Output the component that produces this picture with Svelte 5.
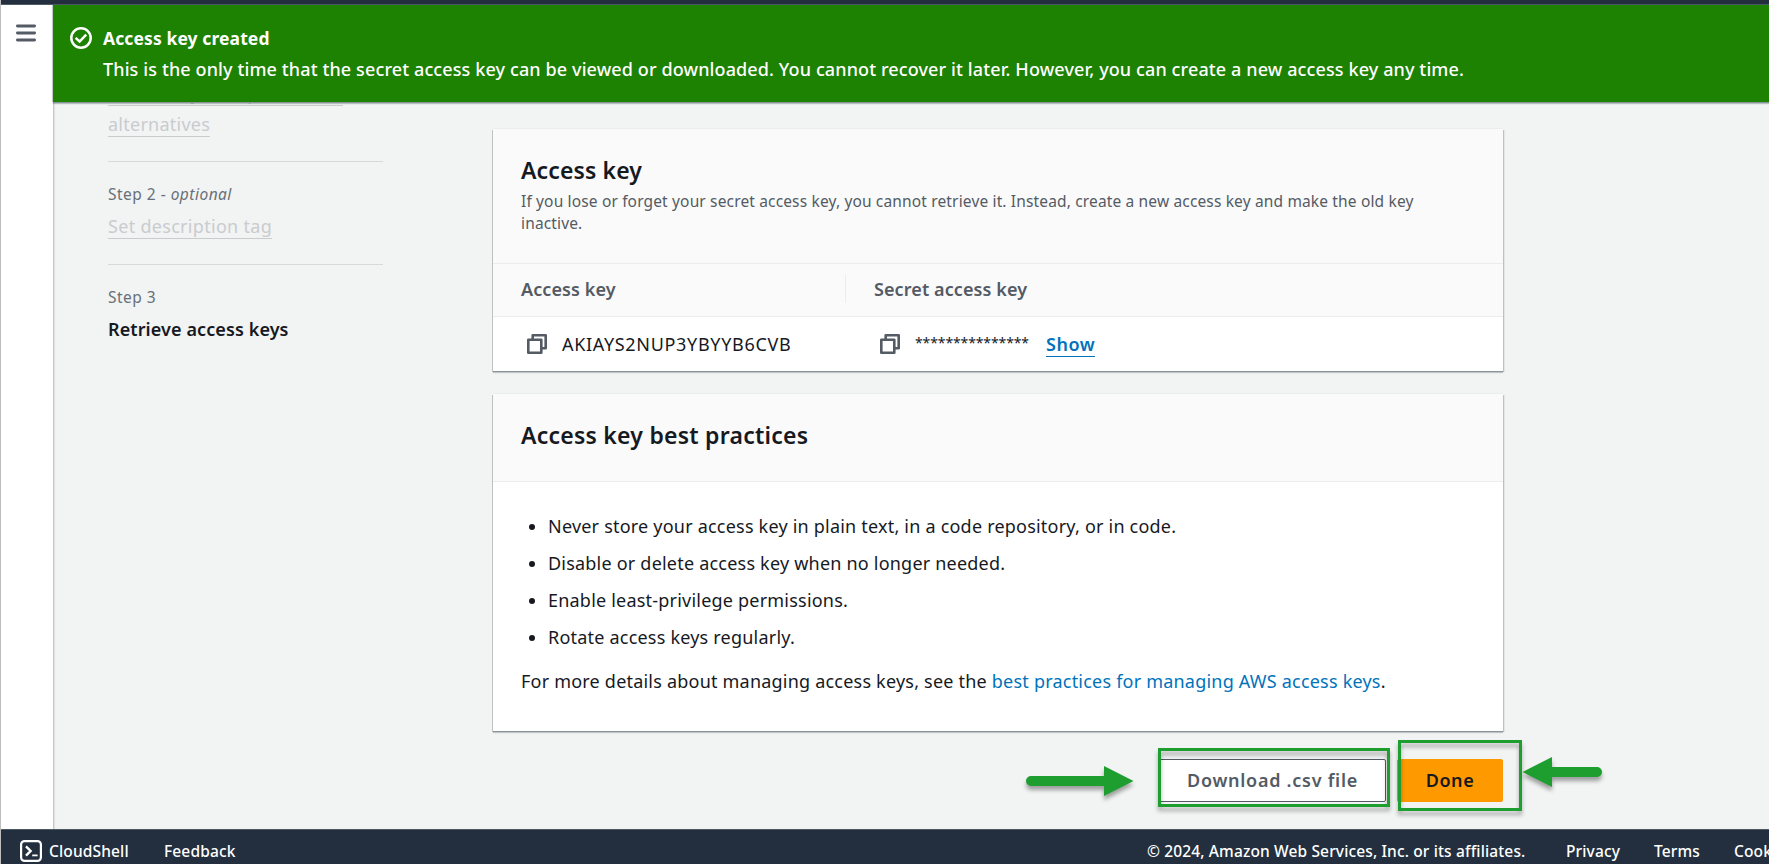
<script>
  const practices = [
    'Never store your access key in plain text, in a code repository, or in code.',
    'Disable or delete access key when no longer needed.',
    'Enable least-privilege permissions.',
    'Rotate access keys regularly.'
  ];
</script>

{#snippet copyIcon()}
  <svg class="copy" width="20" height="20" viewBox="0 0 20 20" fill="none" stroke="#545b64" stroke-width="2.6" stroke-linejoin="round">
    <path d="M1.3 5.7h13v13h-13z" />
    <path d="M5.7 5.2V1.3h13v13h-4" />
  </svg>
{/snippet}

<div class="screen">
  <div class="topbar"></div>
  <div class="body">
    <nav class="rail">
      <svg width="20" height="18" viewBox="0 0 20 18" stroke="#545b64" stroke-width="2.8" stroke-linecap="round">
        <path d="M1.4 2h17.2M1.4 9h17.2M1.4 16h17.2" />
      </svg>
    </nav>
    <main>
      <header class="flash">
        <svg width="22" height="22" viewBox="0 0 22 22" fill="none" stroke="#fff" stroke-width="2.5">
          <circle cx="11" cy="11" r="9.7" />
          <path d="M5.6 10.8l4 3.7 6.6-6.9" />
        </svg>
        <div>
          <div class="flash-title">Access key created</div>
          <div class="flash-text">This is the only time that the secret access key can be viewed or downloaded. You cannot recover it later. However, you can create a new access key any time.</div>
        </div>
      </header>

      <div class="content">
        <ol class="steps">
          <li class="first"><div class="link"><span>Access key best practices &amp; alternatives</span></div></li>
          <li>
            <div class="num">Step 2 - <em>optional</em></div>
            <div class="link"><span>Set description tag</span></div>
          </li>
          <li>
            <div class="num">Step 3</div>
            <div class="current">Retrieve access keys</div>
          </li>
        </ol>

        <div class="panels">
          <section class="card">
            <div class="card-head key-head">
              <h2>Access key</h2>
              <p>If you lose or forget your secret access key, you cannot retrieve it. Instead, create a new access key and make the old key inactive.</p>
            </div>
            <div class="row heads">
              <div class="cell th">Access key</div>
              <div class="cell th">Secret access key</div>
            </div>
            <div class="row values">
              <div class="cell">{@render copyIcon()}<span class="key">AKIAYS2NUP3YBYYB6CVB</span></div>
              <div class="cell">{@render copyIcon()}<span class="stars">***************</span><a class="show" href="#show">Show</a></div>
            </div>
          </section>

          <section class="card second">
            <div class="card-head best-head"><h2>Access key best practices</h2></div>
            <div class="best">
              <ul>
                {#each practices as p}<li>{p}</li>{/each}
              </ul>
              <p>For more details about managing access keys, see the <a href="#docs">best practices for managing AWS access keys</a>.</p>
            </div>
          </section>

          <div class="actions">
            <button class="download">Download .csv file</button>
            <button class="done">Done</button>
          </div>
        </div>
      </div>
    </main>
  </div>

  <footer>
    <svg width="22" height="22" viewBox="0 0 22 22" fill="none" stroke="#fff" stroke-width="2.2">
      <rect x="1.1" y="1.1" width="19.8" height="19.8" rx="3.4" />
      <path d="M6 6.4l4.6 4.6L6 15.6" stroke-width="2.4" />
      <path d="M12.2 15.4h5.4" stroke-width="1.8" />
    </svg>
    <span class="shell">CloudShell</span>
    <span>Feedback</span>
    <span class="copyright">© 2024, Amazon Web Services, Inc. or its affiliates.</span>
    <span class="privacy">Privacy</span>
    <span class="terms">Terms</span>
    <span class="cookie">Cook</span>
  </footer>

  <div class="mark mark-download"></div>
  <div class="mark mark-done"></div>
  <svg class="arrow arrow-right" width="108" height="30" viewBox="0 0 108 30" fill="#1e9e2e">
    <path d="M5 10H78V0L107.5 15 78 30V20H5A5 5 0 0 1 5 10z" />
  </svg>
  <svg class="arrow arrow-left" width="80" height="30" viewBox="0 0 80 30" fill="#1e9e2e">
    <path d="M75 10H30V0L.5 15 30 30V20H75A5 5 0 0 0 75 10z" />
  </svg>
</div>

<style>
  :global(body) { margin: 0; overflow: hidden; }
  .screen {
    position: relative; box-sizing: border-box; width: 1769px; height: 864px; overflow: hidden;
    display: flex; flex-direction: column; border-left: 1px solid #bdbdbd;
    background: #f2f3f3; color: #16191f;
    font: 18px/31px 'Noto Sans', 'Open Sans', sans-serif; letter-spacing: .21px;
  }
  .topbar { height: 4px; flex: none; background: #232f3e; border-bottom: 1px solid #4d5b66; }
  .body { flex: 1; display: flex; min-height: 0; }
  .rail { width: 52px; flex: none; background: #fff; }
  .rail svg { display: block; margin: 19px 0 0 15px; }
  main { flex: 1; min-width: 0; display: flex; flex-direction: column; }

  .flash {
    position: relative; z-index: 1; height: 97px; box-sizing: border-box; flex: none; display: flex; gap: 11px;
    padding: 18px 0 0 17px; background: #1d8102; color: #fff; white-space: nowrap;
    box-shadow: 0 1px 0 #879596, 0 2px 1px rgba(0, 28, 36, .25), -1px 0 1px rgba(0, 28, 36, .2);
  }
  .flash svg { margin-top: 4px; flex: none; }
  .flash-title { font-size: 17.5px; font-weight: 700; letter-spacing: .1px; }
  .flash-text { font-weight: 500; letter-spacing: .115px; }

  .content {
    flex: 1; min-height: 0; overflow: hidden; display: flex; border-left: 1px solid #c3c8cc;
    box-shadow: inset 1px 0 1px rgba(0, 28, 36, .08);
  }
  .steps { width: 275px; flex: none; list-style: none; margin: -24px 0 0 54px; padding: 0; }
  .steps li { padding: 20px 0 22px; }
  .steps li + li { border-top: 1px solid #d5dbdb; }
  .steps li.first { padding: 0 0 21px; }
  .num { font-size: 15.5px; line-height: 24px; color: #687078; letter-spacing: .48px; margin-bottom: 5px; }
  .link { color: #c9cccf; letter-spacing: .3px; }
  .first .link { letter-spacing: .25px; }
  .link span { border-bottom: 1px solid #c9cccf; }
  .current { font-weight: 600; letter-spacing: .1px; }

  .panels { width: 1010px; margin-left: 110px; padding-top: 27px; flex: none; }
  .card {
    background: #fff;
    box-shadow: 0 -1px 0 #eaeded, 0 1px 0 #879596, 0 2px 1px rgba(0, 28, 36, .2),
      1px 1px 0 #c2c8ca, -1px 1px 0 #c2c8ca, 2px 1px 1px rgba(0, 28, 36, .06);
  }
  .second { margin-top: 23px; }
  .card-head { box-sizing: border-box; padding: 26px 60px 0 28px; background: #fafafa; border-bottom: 1px solid #eaeded; }
  .key-head { height: 135px; }
  .best-head { height: 88px; }
  h2 { margin: 0; font-size: 23px; line-height: 30px; font-weight: 600; letter-spacing: .24px; }
  .key-head h2 { letter-spacing: .12px; }
  .card-head p { margin: 5px 0 0; font-size: 15.5px; line-height: 22px; letter-spacing: .15px; color: #545b64; }
  .row { display: grid; grid-template-columns: 353px 1fr; box-sizing: border-box; }
  .heads { height: 53px; padding: 11px 0 13px; background: #fafafa; border-bottom: 1px solid #eaeded; }
  .values { height: 54px; }
  .cell { display: flex; align-items: center; padding-left: 28px; }
  .th { box-sizing: border-box; color: #545b64; font-weight: 600; letter-spacing: .09px; line-height: 28px; }
  .th:first-child { border-right: 1px solid #eaeded; }
  .copy { margin-left: 6px; margin-right: 15px; flex: none; }
  .key { letter-spacing: .68px; }
  .stars { font-size: 14px; letter-spacing: -.12px; line-height: 20px; padding-bottom: 3px; }
  .show { margin-left: 17px; color: #0073bb; font-weight: 600; letter-spacing: .6px; line-height: 24px; text-decoration: none; border-bottom: 1px solid #0073bb; }
  .best { box-sizing: border-box; height: 249px; padding: 26px 28px 0; }
  .best ul { margin: 0; padding: 0 0 0 27px; line-height: 37px; }
  .best ul li { list-style: none; display: flex; align-items: center; }
  .best ul li::before { content: ''; width: 6px; height: 6px; border-radius: 50%; background: #16191f; margin: 0 13px 0 -19px; }
  .best p { margin: 10px 0 0; white-space: nowrap; }
  .best a { color: #0073bb; text-decoration: none; }

  .actions { display: flex; justify-content: flex-end; gap: 11px; margin-top: 28px; }
  button { height: 43px; padding: 0 0 1px; box-sizing: border-box; font: 600 18px 'Noto Sans', sans-serif; border-radius: 2px; }
  .download { width: 227px; background: #fff; border: 1px solid #545b64; color: #545b64; letter-spacing: .73px; }
  .done { width: 106px; background: #f90; border: 1px solid #f90; color: #16191f; letter-spacing: .6px; }

  footer {
    height: 35px; box-sizing: border-box; flex: none; display: flex; align-items: center; padding: 7px 0 0 19px;
    background: #232f3e; border-top: 1px solid #4a5a60; color: #fff;
    font-size: 15.5px; font-weight: 500; line-height: 24px; letter-spacing: .14px; white-space: nowrap;
  }
  footer svg { flex: none; }
  .shell { width: 115px; margin-left: 7px; }
  .copyright { margin-left: auto; width: 419px; }
  .privacy { width: 88px; }
  .terms { width: 80px; }
  .cookie { width: 35px; }

  .mark { position: absolute; box-sizing: border-box; border: 3px solid #1e9e2e; filter: drop-shadow(0 4px 2px rgba(0, 0, 0, .32)); }
  .mark-download { left: 1157px; top: 748px; width: 232px; height: 59px; }
  .mark-done { left: 1397px; top: 740px; width: 124px; height: 71px; }
  .arrow { position: absolute; overflow: visible; filter: drop-shadow(0 4px 2px rgba(0, 0, 0, .35)); }
  .arrow-right { left: 1025px; top: 766px; }
  .arrow-left { left: 1521px; top: 757px; }
</style>
